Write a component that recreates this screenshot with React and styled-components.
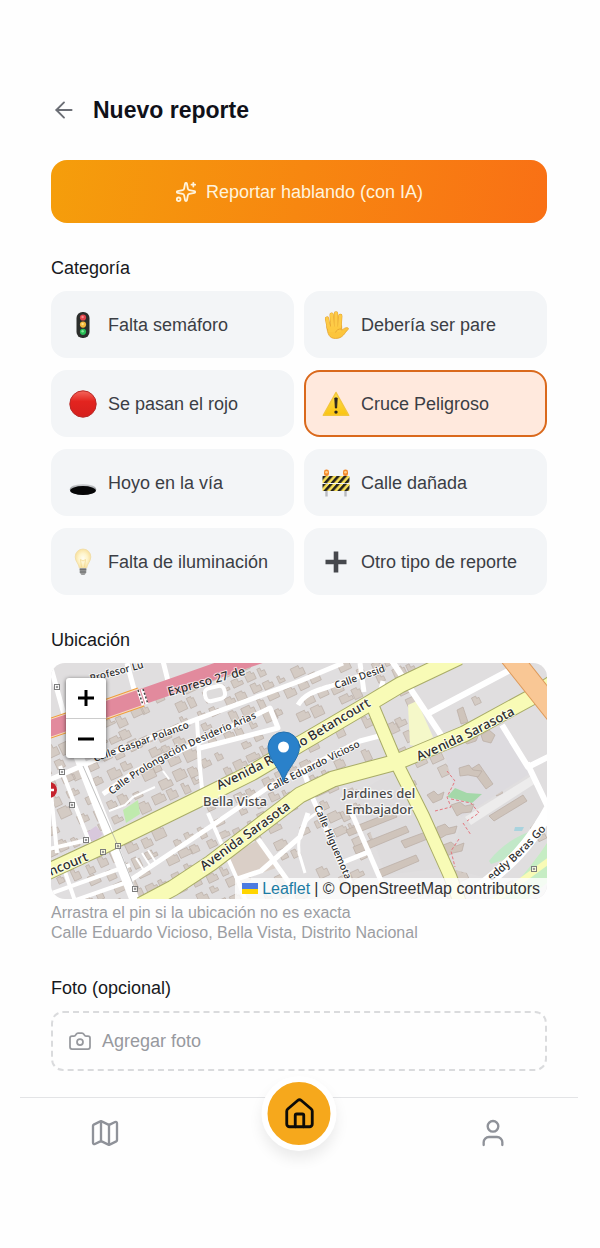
import React, { useState } from "react";
import styled, { createGlobalStyle } from "styled-components";
import { ArrowLeft, Camera, House, Map, Sparkles, User } from "lucide-react";

const GlobalStyle = createGlobalStyle`
  * {
    box-sizing: border-box;
  }

  body {
    margin: 0;
    background: #fefefe;
    color: #17181c;
    font-family: "Liberation Sans", Arial, Helvetica, sans-serif;
    font-size: 18px;
    line-height: 22px;
  }

  button {
    font: inherit;
    cursor: pointer;
  }
`;

const Screen = styled.div`
  padding: 90px 22px 80px 20px;
`;

const Main = styled.main`
  display: flex;
  flex-direction: column;
  gap: 34px;
  padding: 0 31px 26px;
`;

const Top = styled.div`
  display: flex;
  flex-direction: column;
  gap: 30px;
`;

const Header = styled.header`
  display: flex;
  align-items: center;
  gap: 16px;
  height: 40px;
`;

const BackButton = styled.button`
  display: flex;
  padding: 0;
  border: none;
  background: none;
  color: #6b6e75;
`;

const Title = styled.h1`
  margin: 0;
  font-size: 23px;
  line-height: 28px;
  color: #101119;
`;

const VoiceButton = styled.button`
  display: flex;
  align-items: center;
  justify-content: center;
  gap: 9px;
  height: 63px;
  border: none;
  border-radius: 16px;
  background: linear-gradient(100deg, #f59e0b, #f97015);
  color: #fff3dc;
`;

const Section = styled.section`
  display: flex;
  flex-direction: column;
  gap: 12px;
`;

const SectionTitle = styled.h2`
  margin: 0;
  font-size: 18px;
  line-height: 22px;
  font-weight: 400;
`;

const CategoryGrid = styled.div`
  display: grid;
  grid-template-columns: 1fr 1fr;
  gap: 12px 10px;
`;

const Category = styled.label`
  display: flex;
  align-items: center;
  gap: 11px;
  height: 67px;
  padding: 0 16px;
  border: 2px solid ${({ $active }) => ($active ? "#da691c" : "#f3f5f7")};
  border-radius: 16px;
  background: ${({ $active }) => ($active ? "#ffe9dd" : "#f3f5f7")};
  color: #3b3e45;
  white-space: nowrap;
  cursor: pointer;
`;

const HiddenRadio = styled.input`
  position: absolute;
  opacity: 0;
  pointer-events: none;
`;

const Emoji = styled.svg`
  width: 28px;
  height: 28px;
  flex-shrink: 0;
`;

const MapBlock = styled.div`
  display: flex;
  flex-direction: column;
  gap: 4px;
`;

const MapBox = styled.div`
  position: relative;
  height: 236px;
  border-radius: 14px;
  overflow: hidden;
`;

const MapCanvas = styled.svg`
  display: block;
  width: 100%;
  height: 100%;
  font-family: "Noto Sans", "Open Sans", sans-serif;
  font-weight: 500;
`;

const ZoomControl = styled.div`
  position: absolute;
  top: 15px;
  left: 15px;
  display: flex;
  flex-direction: column;
  border-radius: 3px;
  background: #fff;
  box-shadow: 0 1px 4px rgba(0, 0, 0, 0.6);
`;

const ZoomButton = styled.button`
  display: flex;
  align-items: center;
  justify-content: center;
  width: 40px;
  height: 40px;
  padding: 0;
  border: none;
  background: none;
  color: #000;

  & + & {
    border-top: 1px solid #ccc;
  }
`;

const Attribution = styled.div`
  position: absolute;
  right: 0;
  bottom: 0;
  display: flex;
  align-items: center;
  gap: 4px;
  padding: 0 7px;
  background: rgba(255, 255, 255, 0.8);
  font-size: 16px;
  line-height: 21px;
  color: #333;
  white-space: nowrap;

  a {
    color: #1c7ba3;
    text-decoration: none;
  }
`;

const Hint = styled.p`
  margin: 0;
  font-size: 16px;
  line-height: 20px;
  color: #9b9da2;
`;

const PhotoButton = styled.button`
  display: flex;
  align-items: center;
  gap: 10px;
  height: 60px;
  padding: 0 15px;
  border: 2px dashed #dadbdd;
  border-radius: 12px;
  background: none;
  color: #97999e;
`;

const Nav = styled.nav`
  position: relative;
  display: flex;
  align-items: center;
  justify-content: space-between;
  height: 70px;
  padding: 0 69px;
  border-top: 1px solid #e3e4e6;
`;

const NavButton = styled.button`
  display: flex;
  padding: 0;
  border: none;
  background: none;
  color: #8f9299;
`;

const HomeButton = styled.button`
  position: absolute;
  top: -22px;
  left: 50%;
  transform: translateX(-50%);
  display: flex;
  align-items: center;
  justify-content: center;
  width: 75px;
  height: 75px;
  padding: 0;
  border: 6px solid #fff;
  border-radius: 50%;
  background: #f6a81c;
  color: #0d0b08;
  box-shadow: 0 8px 14px rgba(0, 0, 0, 0.08);
`;

const TrafficLight = () => (
  <Emoji viewBox="0 0 28 28" aria-hidden="true">
    <rect x="7.5" y="1" width="13" height="26" rx="6" fill="#2b2e2c" />
    <circle cx="14" cy="6.5" r="3.1" fill="#e0444a" />
    <circle cx="14" cy="13.6" r="3.1" fill="#f2b63a" />
    <circle cx="14" cy="20.8" r="3.1" fill="#27bd55" />
    <circle cx="13.6" cy="6" r="1.2" fill="#f58d8d" />
    <circle cx="13.6" cy="13" r="1.2" fill="#ffe08a" />
    <circle cx="13.6" cy="20.2" r="1.2" fill="#84e79a" />
  </Emoji>
);

const FINGERS = "M5 7.5 6.8 17M9.600 3.600l.9 12M14 2.300v13M18.300 4.800 17.600 16";

const Hand = () => (
  <Emoji viewBox="0 0 28 28" aria-hidden="true">
    <path
      d="M4.800 15.500c3-2 11-2.500 14.800-1l.2 4.700c2-1.400 3.400-2.900 5.700-2.500 1.300.3 1 1.500.2 2.200-3.100 2.700-4.600 8.600-12.200 8.600-6.200 0-8-4.500-8.700-12Z"
      fill="#fcc53c"
      stroke="#e5a330"
      strokeWidth="0.800"
    />
    <path d={FINGERS} stroke="#e5a330" strokeWidth="4.200" strokeLinecap="round" />
    <path d={FINGERS} stroke="#fdcb47" strokeWidth="3.200" strokeLinecap="round" />
    <path d="M5.600 15.500h13.200v5.500H6.400Z" fill="#fdc941" />
    <path d="M13.500 21.500c1-2.600 3-3.800 6.300-3.500" fill="none" stroke="#e5a330" strokeWidth="0.900" />
  </Emoji>
);

const RedCircle = () => (
  <Emoji viewBox="0 0 28 28" aria-hidden="true">
    <defs>
      <linearGradient id="redBall" x1="0" y1="0" x2="0" y2="1">
        <stop offset="0" stopColor="#f4665c" />
        <stop offset="0.4" stopColor="#e3241f" />
        <stop offset="1" stopColor="#d51f1d" />
      </linearGradient>
    </defs>
    <circle cx="14" cy="14" r="13.2" fill="url(#redBall)" stroke="#b82a28" />
  </Emoji>
);

const Warning = () => (
  <Emoji viewBox="0 0 28 28" aria-hidden="true">
    <defs>
      <linearGradient id="warn" x1="0" y1="0" x2="0" y2="1">
        <stop offset="0" stopColor="#fcdf50" />
        <stop offset="1" stopColor="#fbc40f" />
      </linearGradient>
    </defs>
    <path
      d="M14 2.500 26.700 25.300H1.300Z"
      fill="url(#warn)"
      stroke="#f3c63b"
      strokeWidth="1.500"
      strokeLinejoin="round"
    />
    <path d="M12.800 8h2.400L14.600 18h-1.200Z" fill="#2a2520" stroke="#2a2520" strokeLinejoin="round" />
    <circle cx="14" cy="22.100" r="1.700" fill="#2a2520" />
  </Emoji>
);

const Hole = () => (
  <Emoji viewBox="0 0 28 28" aria-hidden="true">
    <defs>
      <linearGradient id="rim" x1="0" y1="0" x2="0" y2="1">
        <stop offset="0" stopColor="#d5d7da" />
        <stop offset="1" stopColor="#55585c" />
      </linearGradient>
    </defs>
    <ellipse cx="14" cy="20.500" rx="13.200" ry="5.500" fill="url(#rim)" />
    <ellipse cx="14" cy="21.500" rx="12.800" ry="4.400" fill="#060607" />
  </Emoji>
);

const Barrier = () => (
  <Emoji viewBox="0 0 28 28" aria-hidden="true">
    <defs>
      <pattern
        id="stripes"
        width="7"
        height="7"
        patternUnits="userSpaceOnUse"
        patternTransform="skewX(-42)"
      >
        <rect width="7" height="7" fill="#f7de56" />
        <rect width="3.500" height="7" fill="#25231f" />
      </pattern>
    </defs>
    <path d="M4.500 7v20.500M23.500 7v20.500" stroke="#b9bbbf" strokeWidth="2.400" />
    <rect x="2" y="0.500" width="5" height="6.500" rx="2.300" fill="#f58a2c" />
    <rect x="21" y="0.500" width="5" height="6.500" rx="2.300" fill="#f58a2c" />
    <circle cx="4.500" cy="3.300" r="1.300" fill="#ffcf8a" />
    <circle cx="23.500" cy="3.300" r="1.300" fill="#ffcf8a" />
    <rect x="0.500" y="7" width="27" height="7" fill="url(#stripes)" />
    <rect x="0.500" y="15" width="27" height="7" fill="url(#stripes)" />
  </Emoji>
);

const Bulb = () => (
  <Emoji viewBox="0 0 28 28" aria-hidden="true">
    <defs>
      <radialGradient id="glow">
        <stop offset="0" stopColor="#fffdf0" />
        <stop offset="0.550" stopColor="#fef4cb" />
        <stop offset="1" stopColor="#f9e2a0" />
      </radialGradient>
    </defs>
    <path
      d="M14 1a7.800 7.800 0 0 0-7.800 7.900c0 4.600 3.600 6.600 4.100 11.100h7.400c.5-4.500 4.100-6.500 4.100-11.100A7.800 7.800 0 0 0 14 1Z"
      fill="url(#glow)"
      stroke="#f0dca5"
      strokeWidth="0.800"
    />
    <path d="m12.500 19-1-7.500 2.500 1.500 2.500-1.500-1 7.500" fill="none" stroke="#f3d890" strokeWidth="0.800" />
    <path d="M10.700 20h6.600v4.500L15.500 27h-3l-1.800-2.500Z" fill="#9b9c9c" />
    <path d="M10.700 21.700h6.600M10.900 24h6" stroke="#5f6061" strokeWidth="0.900" />
  </Emoji>
);

const Plus = () => (
  <Emoji viewBox="0 0 28 28" aria-hidden="true">
    <path d="M14 3.500v21M3.500 14h21" stroke="#46484d" strokeWidth="4.600" />
  </Emoji>
);

const CATEGORIES = [
  { id: "semaforo", label: "Falta semáforo", Icon: TrafficLight },
  { id: "pare", label: "Debería ser pare", Icon: Hand },
  { id: "rojo", label: "Se pasan el rojo", Icon: RedCircle },
  { id: "cruce", label: "Cruce Peligroso", Icon: Warning },
  { id: "hoyo", label: "Hoyo en la vía", Icon: Hole },
  { id: "calle", label: "Calle dañada", Icon: Barrier },
  { id: "luz", label: "Falta de iluminación", Icon: Bulb },
  { id: "otro", label: "Otro tipo de reporte", Icon: Plus },
];

// city blocks: rows of footprints laid along the street direction
const buildBlocks = () => {
  let seed = 11;
  const rand = () => {
    seed = (seed * 16807) % 2147483647;
    return seed / 2147483647;
  };
  const blocks = [];
  for (let row = 0; row < 24; row++) {
    for (let col = 0; col < 34; col++) {
      const x = -60 + col * 15 + rand() * 5;
      const y = -20 + row * 15 + rand() * 5;
      const density = x > 290 ? 0.38 : y > 190 ? 0.4 : 0.72;
      const w = 6 + rand() * 7;
      const h = 6 + rand() * 6;
      if (rand() < density) {
        const c = 2 + rand() * 2;
        blocks.push(`M${x} ${y}h${w - c}v${c}h${c}v${h - c}h${-w}z`);
      }
    }
  }
  return blocks.join("");
};

const BLOCKS = buildBlocks();

const STREETS = [
  { w: 5, d: "M0 5 14 55M76 0l8 30M112-2l5 20" },
  { w: 5, d: "M-4 118 42 98 141 58 249 18 292 0" },
  { w: 5, d: "M52 131 85 108 146 80 219 45l8 20-78 20" },
  { w: 4, d: "M146 58l3 48 2 20M157 150l29 66 9 22" },
  { w: 10, d: "M27 92 84 238" },
  { w: 4, d: "M9 103 41 186M-2 186l38-9M-2 231l81-29M22 238l60-21M12 203l12 35M0 130l6 60" },
  { w: 5, d: "M81 216 162 162 216 125 309 78 332 72" },
  { w: 5, d: "M207 176l32 45M186 216l24-8 39-34 8-24" },
  { w: 5, d: "M252 106l10 30 37 84M299 146l32 74M290 200l30-12" },
  { w: 5, d: "M247 42c6-10 14-13 30-18l55-19M309 0l4 29M332 18l-4 16" },
  { w: 6, d: "M341-2 394 78M376 51l83-44" },
  { w: 6, d: "M451 62l26 42 22-11M476 100l20 42" },
  { w: 3, d: "M270 148c-18 8-24 20-22 42l6 20" },
  { w: 12, d: "M425 228c24-20 50-36 78-90" },
  { w: 2, d: "M58 148l16-6 8-8 22-10M85 195l9 14M91 190l9 14M97 187l9 14M112 108l6 8" },
];

const YELLOW_ROADS = [
  "M-6 210 52 183 99 160 146 137 202 109 249 81 319 40 349 22 408-6",
  "M90 242 122 225 160 200 215 158 249 132 282 116 346 99 413 71 479 35 502 20",
  "M322 44 346 101 372 153 399 213 410 242",
];

const BARRIERS = [
  [6, 24],
  [11, 109],
  [21, 142],
  [35, 177],
  [52, 189],
  [67, 183],
  [84, 226],
  [483, 206],
];

const StreetLabel = ({ id, d, size = 11, children }) => (
  <>
    <path id={id} d={d} fill="none" />
    <text
      fontSize={size}
      fill="#2d2d2d"
      stroke="#ffffff"
      strokeOpacity="0.700"
      strokeWidth="2"
      paintOrder="stroke"
    >
      <textPath href={`#${id}`}>{children}</textPath>
    </text>
  </>
);

const StreetMap = () => (
  <MapCanvas viewBox="0 0 496 236" preserveAspectRatio="xMidYMid slice" role="img" aria-label="Mapa">
    <rect width="496" height="236" fill="#e0dedf" />
    <path
      d={BLOCKS}
      transform="rotate(-25 248 118)"
      fill="#d4cbc4"
      stroke="#bdb1a9"
      strokeWidth="0.700"
    />
    <path d="M175 195 207 177 228 204 187 218Z" fill="#dacfc7" />
    <path d="M305 130 345 108 392 205 335 212Z" fill="#dedcdd" />
    <path d="M392 84l58-24 30 50-70 44Z" fill="#dddbdf" />
    <path d="M410 160l75-45 11 30-60 70-40-10Z" fill="#dedcdd" />
    <g fill="#cfc4bb" stroke="#b9aca3" strokeWidth="0.700">
      <path d="M438 153l34-21 4 6-33 20zM420 106l8-5 14 20-7 5zM406 47l6-3 5 15-7 2zM295 167l48-19 3 6-48 19zM302 184l53-21 3 6-53 22zM325 208l40-16 3 6-40 17zM350 178l30-11 4 6-30 12z" />
      <path d="M386 164l8-3 4 4 8-2-2 7-9 2-5 3-5-4zM392 182l8-3 5 4 8-3-2 8-9 2-6 3zM400 142l9-3 5 4 9-2-3 8-9 1-5 3zM408 105l10-3 4 5 9 1-4 6-10-2-8 1zM376 132l7-4 4 4 6-3-2 7-9 4zM406 72l9-3 4 4 9-2-3 7-9 3zM430 72l8-5 6 5-4 8-8-2z" />
    </g>
    <path d="M72 147 87 137 89 151 75 160Z" fill="#bfeaad" />
    <path d="M35 170l10-7 7 8-9 9Z" fill="#d8c8dc" />
    <path d="M396 134l8-9 12 5 15 1-10 9-12-3Z" fill="#a4d8a9" />
    <path d="M438 198c14-18 30-26 48-32l-22 27-24 8Z" fill="#c2e8c8" />
    <path d="M450 236c20-20 34-38 46-56v40l-20 16Z" fill="#c6edc4" />
    <path d="M464 164h9l-2 4h-8z" fill="#a9d3de" />
    <path d="M357 42l9-4 16 36-13 10-10-2z" fill="#f5f8c9" />
    <path d="M414 154 482 112l6 6-68 44Z" fill="#edecec" />
    <g fill="none" stroke="#e4767e" strokeWidth="1" strokeDasharray="3 2">
      <path d="M396 108l8 10-8 16 4 10-16 4M400 136l20 4 8 10-12 8M412 160l8 12M408 176l-8 12 4 16" />
    </g>
    {STREETS.map(({ d, w }) => (
      <path key={d} d={d} fill="none" stroke="#fff" strokeWidth={w} strokeLinejoin="round" />
    ))}
    <rect
      x="154"
      y="24"
      width="20"
      height="13"
      rx="5"
      transform="rotate(-14 164 31)"
      fill="#dedcdc"
      stroke="#fff"
      strokeWidth="4"
    />
    <g fill="none" stroke="#a9ac68">
      {YELLOW_ROADS.map((d, i) => (
        <path key={d} d={d} strokeWidth={i === 2 ? 14 : 17} />
      ))}
    </g>
    <g fill="none" stroke="#f8fbb6">
      {YELLOW_ROADS.map((d, i) => (
        <path key={d} d={d} strokeWidth={i === 2 ? 12 : 15} />
      ))}
    </g>
    <path d="M440 240 500 196" stroke="#f8fbb6" strokeWidth="6" />
    <path d="M452-16 506 52" stroke="#dc9858" strokeWidth="22" />
    <path d="M452-16 506 52" stroke="#f9c795" strokeWidth="20" />
    <g fill="none">
      <path d="M-6 67 56 46 90 34" stroke="#ef9d3c" strokeWidth="20" />
      <path d="M-6 67 56 46 90 34" stroke="#f6dcc0" strokeWidth="18" />
      <path d="M-6 67 56 46 119 24 216-10" stroke="#e28a9d" strokeWidth="16" />
      <path d="M87 27l5 15M91 26l5 15" stroke="#fff" strokeWidth="3" />
      <path d="M87 27l5 15M92 26l5 15" stroke="#444" strokeWidth="1.500" strokeDasharray="2 2" />
    </g>
    <path d="M32 103 67 183 84 226" fill="none" stroke="#a5a5a5" strokeWidth="0.700" />
    <g fill="#fff" fillOpacity="0.600" stroke="#7d7d7d">
      {BARRIERS.map(([x, y]) => (
        <g key={`${x}-${y}`}>
          <rect x={x - 2.5} y={y - 2.5} width="5" height="5" />
          <circle cx={x} cy={y} r="0.800" />
        </g>
      ))}
    </g>
    <circle cx="-2" cy="127" r="8" fill="#c5222c" />
    <path d="M-8 127h11" stroke="#fff" strokeWidth="2.500" />

    <StreetLabel id="profesor" d="M40 19 110 0" size={10}>
      Profesor Lu
    </StreetLabel>
    <StreetLabel id="expreso" d="M118 33 240-1" size={12}>
      Expreso 27 de
    </StreetLabel>
    <StreetLabel id="gaspar" d="M44 99 160 57" size={10}>
      Calle Gaspar Polanco
    </StreetLabel>
    <StreetLabel id="prolongacion" d="M61 132Q95 104 146 81T240 41" size={10}>
      Calle Prolongación Desiderio Arias
    </StreetLabel>
    <StreetLabel id="desiderio" d="M285 26 380-8" size={10}>
      Calle Desid
    </StreetLabel>
    <StreetLabel id="romulo" d="M168 127Q216 105 254 82T350 25" size={13}>
      Avenida Rómulo Betancourt
    </StreetLabel>
    <StreetLabel id="romuloOeste" d="M0 213 60 188" size={13}>
      ncourt
    </StreetLabel>
    <StreetLabel id="sarasotaOeste" d="M153 208 250 138" size={13}>
      Avenida Sarasota
    </StreetLabel>
    <StreetLabel id="sarasota" d="M368 98Q415 78 480 43" size={13}>
      Avenida Sarasota
    </StreetLabel>
    <StreetLabel id="vicioso" d="M218 129 330 73" size={10}>
      Calle Eduardo Vicioso
    </StreetLabel>
    <StreetLabel id="higuemota" d="M263 144 300 230" size={10}>
      Calle Higuemota
    </StreetLabel>
    <StreetLabel id="freddy" d="M440 218Q472 194 506 154" size={11}>
      eddy Beras Go
    </StreetLabel>
    <g
      fontSize="13"
      fill="#4a4a4a"
      stroke="#ffffff"
      strokeOpacity="0.800"
      strokeWidth="2.500"
      paintOrder="stroke"
      textAnchor="middle"
    >
      <text x="184" y="143">
        Bella Vista
      </text>
      <text x="328" y="135">
        Jardines del
      </text>
      <text x="328" y="151">
        Embajador
      </text>
    </g>

    <path
      d="M232.500 119C230 106 217 97 217 83.500a15.800 15.800 0 0 1 31.500 0C248.500 97 235 106 232.500 119Z"
      fill="#2a81ca"
      stroke="#2470ad"
    />
    <circle cx="232.500" cy="84" r="5.500" fill="#fff" />
  </MapCanvas>
);

const App = () => {
  const [category, setCategory] = useState("cruce");

  return (
    <>
      <GlobalStyle />
      <Screen>
        <Main>
          <Top>
            <Header>
              <BackButton type="button" aria-label="Volver">
                <ArrowLeft size={26} strokeWidth={1.75} />
              </BackButton>
              <Title>Nuevo reporte</Title>
            </Header>
            <VoiceButton type="button">
              <Sparkles size={22} />
              Reportar hablando (con IA)
            </VoiceButton>
          </Top>

          <Section>
            <SectionTitle id="categoria">Categoría</SectionTitle>
            <CategoryGrid role="radiogroup" aria-labelledby="categoria">
              {CATEGORIES.map(({ id, label, Icon }) => (
                <Category key={id} htmlFor={id} $active={category === id}>
                  <HiddenRadio
                    type="radio"
                    id={id}
                    name="categoria"
                    checked={category === id}
                    onChange={() => setCategory(id)}
                  />
                  <Icon />
                  {label}
                </Category>
              ))}
            </CategoryGrid>
          </Section>

          <Section>
            <SectionTitle>Ubicación</SectionTitle>
            <MapBlock>
              <MapBox>
                <StreetMap />
                <ZoomControl>
                  <ZoomButton type="button" aria-label="Acercar">
                    <svg width="16" height="16" viewBox="0 0 16 16">
                      <path d="M8 0v16M0 8h16" stroke="currentColor" strokeWidth="3" />
                    </svg>
                  </ZoomButton>
                  <ZoomButton type="button" aria-label="Alejar">
                    <svg width="16" height="16" viewBox="0 0 16 16">
                      <path d="M0 8h16" stroke="currentColor" strokeWidth="3" />
                    </svg>
                  </ZoomButton>
                </ZoomControl>
                <Attribution>
                  <svg width="16" height="11" viewBox="0 0 16 11" aria-hidden="true">
                    <path fill="#4c7be1" d="M0 0h16v6H0z" />
                    <path fill="#ffd500" d="M0 6h16v5H0z" />
                  </svg>
                  <a href="#leaflet">Leaflet</a>
                  <span>| © OpenStreetMap contributors</span>
                </Attribution>
              </MapBox>
              <div>
                <Hint>Arrastra el pin si la ubicación no es exacta</Hint>
                <Hint>Calle Eduardo Vicioso, Bella Vista, Distrito Nacional</Hint>
              </div>
            </MapBlock>
          </Section>

          <Section>
            <SectionTitle>Foto (opcional)</SectionTitle>
            <PhotoButton type="button">
              <Camera size={24} strokeWidth={1.75} />
              Agregar foto
            </PhotoButton>
          </Section>
        </Main>

        <Nav>
          <NavButton type="button" aria-label="Mapa">
            <Map size={32} strokeWidth={1.75} />
          </NavButton>
          <HomeButton type="button" aria-label="Inicio">
            <House size={34} />
          </HomeButton>
          <NavButton type="button" aria-label="Perfil">
            <User size={32} strokeWidth={1.75} />
          </NavButton>
        </Nav>
      </Screen>
    </>
  );
};

export default App;
